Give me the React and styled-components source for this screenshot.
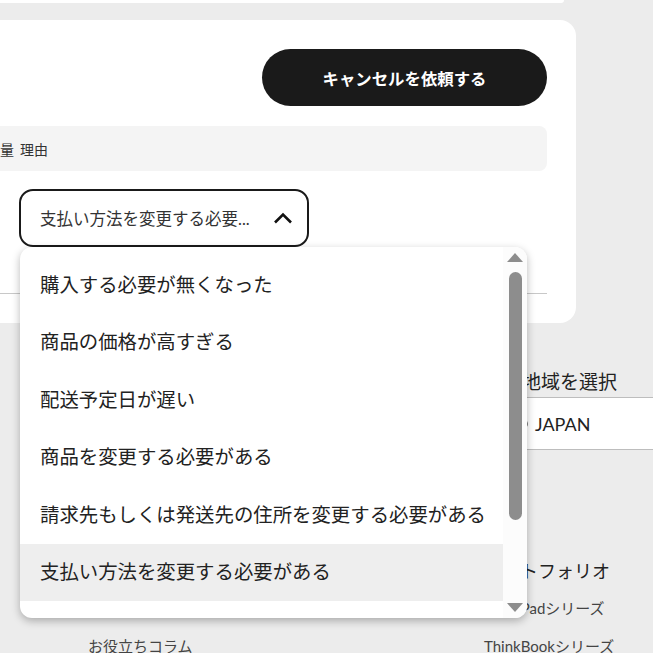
import React from 'react';
import styled, { createGlobalStyle } from 'styled-components';

const GlobalStyle = createGlobalStyle`
    body {
        margin: 0;
        background: #ececec;
        font-family: Lato, "Noto Sans CJK JP", sans-serif;
        color: #222;
    }
`;

const Page = styled.div`
    width: 653px;
    height: 653px;
    overflow: hidden;
    background: #ececec;
`;

// 上のカードの下端だけ見えている
const TopStrip = styled.div`
    width: 564px;
    height: 3px;
    background: #fff;
    border-radius: 0 0 10px 0;
`;

const Card = styled.section`
    box-sizing: border-box;
    width: 590px;
    margin: 17px 0 0 -14px;
    padding: 29px 29px 29px 0;
    background: #fff;
    border-radius: 0 16px 16px 0;
`;

const Actions = styled.div`
    display: flex;
    justify-content: flex-end;
`;

const CancelButton = styled.button`
    width: 285px;
    height: 57px;
    border: none;
    border-radius: 29px;
    background: #1a1a1a;
    color: #fff;
    font-family: inherit;
    font-size: 16.4px;
    font-weight: bold;
`;

const TableHead = styled.div`
    display: grid;
    grid-template-columns: 28px 1fr;
    column-gap: 6px;
    align-items: center;
    height: 45px;
    margin-top: 20px;
    background: #f4f4f4;
    border-radius: 0 8px 8px 0;
    font-size: 14px;
    color: #333;
`;

const TableRow = styled.div`
    display: grid;
    grid-template-columns: 28px 1fr;
    column-gap: 6px;
    margin-top: 18px;
`;

const SelectWrap = styled.div`
    position: relative;
    width: 290px;
    margin-left: -1px;
`;

const Select = styled.div`
    box-sizing: border-box;
    height: 58px;
    display: flex;
    align-items: center;
    justify-content: space-between;
    padding: 0 14px 0 19px;
    border: 2px solid #1a1a1a;
    border-radius: 14px;
    font-size: 16.5px;
    color: #333;
`;

const Dropdown = styled.div`
    position: absolute;
    top: 100%;
    left: 1px;
    z-index: 5;
    width: 507px;
    height: 371px;
    display: flex;
    background: #fff;
    border-radius: 12px;
    box-shadow: 0 3px 9px rgba(0, 0, 0, 0.28);
    overflow: hidden;
`;

const OptionList = styled.ul`
    flex: 1;
    margin: 0;
    padding: 9px 0 0;
    list-style: none;
    overflow: hidden;
`;

const Option = styled.li`
    box-sizing: border-box;
    height: 57.5px;
    display: flex;
    align-items: center;
    padding: 0 0 3px 20px;
    font-size: 19.4px;
    color: #222;
    white-space: nowrap;
    background: ${props => props.active ? "#eeeeee" : "transparent"};
`;

const ScrollBar = styled.div`
    width: 24px;
    display: flex;
    flex-direction: column;
    align-items: center;
    padding: 6px 0;
    background: #fcfcfc;
`;

const Track = styled.div`
    flex: 1;
    display: flex;
    flex-direction: column;
    align-items: center;
`;

const Thumb = styled.div`
    width: 13px;
    height: 248px;
    margin-top: 10px;
    background: #8d8d8d;
    border-radius: 7px;
`;

const Divider = styled.hr`
    height: 1px;
    margin: 46px 0 0;
    border: none;
    background: #c8c8c8;
`;

const Region = styled.div`
    margin: 46px 0 0 484px;
`;

const RegionLabel = styled.div`
    font-size: 19px;
    line-height: 26px;
    color: #222;
`;

const RegionBox = styled.div`
    box-sizing: border-box;
    height: 53px;
    margin-top: 2px;
    display: flex;
    align-items: center;
    gap: 7px;
    padding-left: 32px;
    background: #fff;
    border-top: 1px solid #bdbdbd;
    border-bottom: 1px solid #bdbdbd;
    font-size: 18px;
    color: #222;
`;

const LinkColumns = styled.div`
    display: grid;
    grid-template-columns: 396px 1fr;
    align-items: end;
    margin-top: 108px;
    padding-left: 88px;
`;

const LinkColumn = styled.div`
    display: flex;
    flex-direction: column;
`;

const ColumnTitle = styled.div`
    font-size: 18px;
    line-height: 26px;
    color: #222;
    margin-bottom: 13px;
`;

const FooterLink = styled.a`
    font-size: 15px;
    line-height: 22px;
    color: #444;
    text-decoration: none;
    white-space: nowrap;
    & + & {
        margin-top: 16px;
    }
`;

const Triangle = ({ down }) => (
    <svg width="16" height="9" viewBox="0 0 16 9">
        <polygon points={down ? "0,0 16,0 8,9" : "0,9 16,9 8,0"} fill="#8d8d8d" />
    </svg>
);

const ChevronUp = () => (
    <svg width="20" height="12" viewBox="0 0 20 12">
        <path d="M2 10.5 L10 2.5 L18 10.5" fill="none" stroke="#111" strokeWidth="2.6" />
    </svg>
);

const Globe = () => (
    <svg width="12" height="12" viewBox="0 0 12 12">
        <circle cx="6" cy="6" r="5.2" fill="none" stroke="#555" strokeWidth="1.2" />
    </svg>
);

const reasons = [
    "購入する必要が無くなった",
    "商品の価格が高すぎる",
    "配送予定日が遅い",
    "商品を変更する必要がある",
    "請求先もしくは発送先の住所を変更する必要がある",
    "支払い方法を変更する必要がある",
];

export default function App() {
    return (
        <Page>
            <GlobalStyle />
            <TopStrip />
            <Card>
                <Actions>
                    <CancelButton>キャンセルを依頼する</CancelButton>
                </Actions>
                <TableHead>
                    <span>数量</span>
                    <span>理由</span>
                </TableHead>
                <TableRow>
                    <span />
                    <SelectWrap>
                        <Select>
                            <span>支払い方法を変更する必要...</span>
                            <ChevronUp />
                        </Select>
                        <Dropdown>
                            <OptionList>
                                {reasons.map((r, i) => (
                                    <Option key={r} active={i === 5}>{r}</Option>
                                ))}
                            </OptionList>
                            <ScrollBar>
                                <Triangle />
                                <Track>
                                    <Thumb />
                                </Track>
                                <Triangle down />
                            </ScrollBar>
                        </Dropdown>
                    </SelectWrap>
                </TableRow>
                <Divider />
            </Card>
            <Region>
                <RegionLabel>国・地域を選択</RegionLabel>
                <RegionBox>
                    <Globe />
                    <span>JAPAN</span>
                </RegionBox>
            </Region>
            <LinkColumns>
                <LinkColumn>
                    <FooterLink>お役立ちコラム</FooterLink>
                </LinkColumn>
                <LinkColumn>
                    <ColumnTitle>ポートフォリオ</ColumnTitle>
                    <FooterLink>ThinkPadシリーズ</FooterLink>
                    <FooterLink>ThinkBookシリーズ</FooterLink>
                </LinkColumn>
            </LinkColumns>
        </Page>
    );
}
